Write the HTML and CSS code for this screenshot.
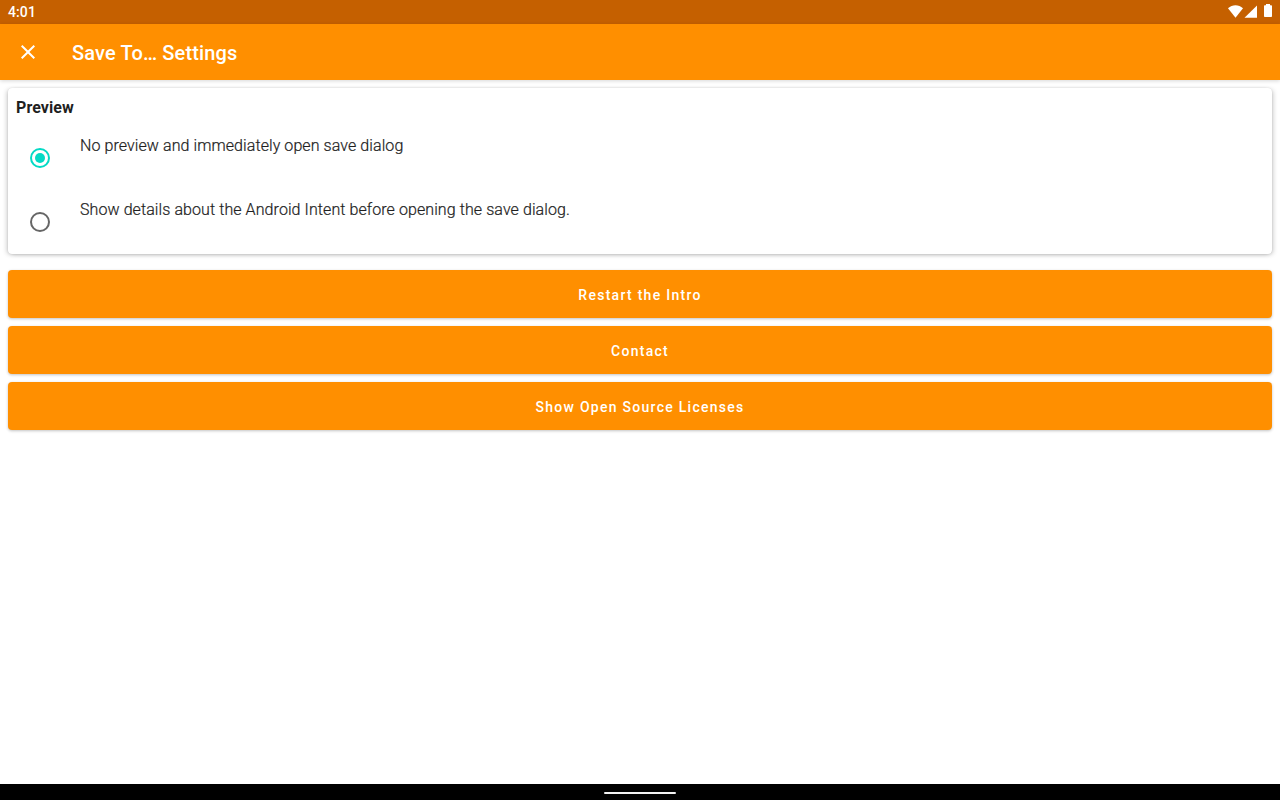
FILE: index.html
```html
<!DOCTYPE html>
<html lang="en">
<head>
<meta charset="utf-8">
<title>Save To… Settings</title>
<link rel="stylesheet" href="styles.css">
</head>
<body>
<div class="status-bar">
  <span class="clock">4:01</span>
  <svg class="status-icons" width="48" height="24" viewBox="0 0 48 24" fill="#fff">
    <path d="M0 8.300C4.400 4.300 10.600 4.300 15 8.300L7.500 17.700Z"/>
    <path d="M29 5.500V17.700H16.500Z"/>
    <path d="M38 4h4v1.300h1.200q.8 0 .8.8v10.100q0 .8-.8.8h-6.400q-.8 0-.8-.8V6.100q0-.8.8-.8H38Z"/>
  </svg>
</div>
<header class="app-bar">
  <svg class="close" width="24" height="24" viewBox="0 0 24 24" fill="#fff"><path d="M19 6.410 17.590 5 12 10.590 6.410 5 5 6.410 10.590 12 5 17.590 6.410 19 12 13.410 17.590 19 19 17.590 13.410 12z"/></svg>
  <h1 class="title">Save To… Settings</h1>
</header>
<main class="content">
  <section class="card">
    <h2 class="card-title">Preview</h2>
    <div class="option">
      <svg class="radio" width="24" height="24" viewBox="0 0 24 24"><circle cx="12" cy="12" r="9" fill="none" stroke="#03dac5" stroke-width="2"/><circle cx="12" cy="12" r="5" fill="#03dac5"/></svg>
      <span class="label">No preview and immediately open save dialog</span>
    </div>
    <div class="option">
      <svg class="radio" width="24" height="24" viewBox="0 0 24 24"><circle cx="12" cy="12" r="9" fill="none" stroke="#666" stroke-width="2"/></svg>
      <span class="label">Show details about the Android Intent before opening the save dialog.</span>
    </div>
  </section>
  <button class="action">Restart the Intro</button>
  <button class="action">Contact</button>
  <button class="action">Show Open Source Licenses</button>
</main>
<footer class="nav-bar"><div class="handle"></div></footer>
</body>
</html>
```

FILE: styles.css
```css
* { box-sizing: border-box; }
body { margin: 0; height: 800px; display: flex; flex-direction: column; background: #fff; font-family: Roboto, sans-serif; color: #1f1f1f; overflow: hidden; }
.status-bar { height: 24px; flex: none; background: #c56000; display: flex; align-items: center; justify-content: space-between; padding: 0 4px 0 8px; }
.clock { color: #fff; font-size: 14px; font-weight: 500; line-height: 24px; letter-spacing: .1px; }
.app-bar { height: 56px; flex: none; background: #ff8f00; display: flex; align-items: center; padding: 0 16px; gap: 32px; box-shadow: 0 1px 4px rgba(0,0,0,.16); }
.title { margin: 2px 0 0; color: #fff; font-size: 20px; font-weight: 500; line-height: 24px; letter-spacing: .14px; }
.content { flex: 1; display: flex; flex-direction: column; gap: 8px; padding: 8px; }
.card { height: 166px; margin-bottom: 8px; padding: 8px; border-radius: 4px; background: #fff; box-shadow: 0 0 1px rgba(0,0,0,.12), -2px 1px 5px -1px rgba(0,0,0,.22), 2px 1px 5px -1px rgba(0,0,0,.22); }
.card-title { margin: 0; font-size: 16px; font-weight: 700; line-height: 24px; letter-spacing: .08px; }
.option { height: 64px; display: flex; align-items: flex-start; padding: 18px 12px; gap: 28px; }
.radio { flex: none; margin-top: 8px; }
.label { font-size: 16px; font-weight: 300; line-height: 16px; letter-spacing: .085px; color: #1f1f1f; -webkit-text-stroke: .22px #1f1f1f; }
.action { height: 48px; border: 0; border-radius: 4px; background: #ff8f00; color: #fff; font: 500 14px/20px Roboto, sans-serif; letter-spacing: 1.27px; padding: 2px 0 0; box-shadow: 0 1px 3px rgba(0,0,0,.24); }
.nav-bar { height: 16px; flex: none; background: #000; display: flex; justify-content: center; align-items: center; padding-top: 2px; }
.handle { width: 72px; height: 2px; border-radius: 1px; background: #f2f2f2; }
```
